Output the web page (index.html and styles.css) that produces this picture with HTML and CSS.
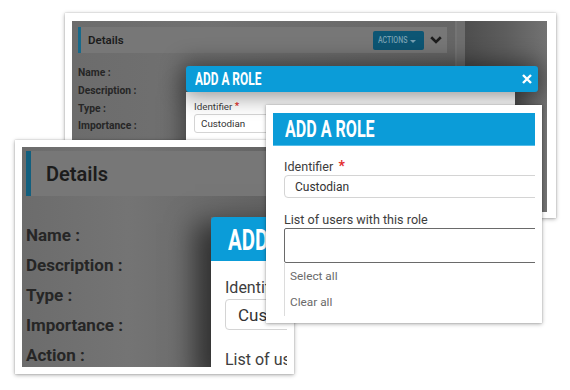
FILE: index.html
```html
<!DOCTYPE html>
<html lang="en">
<head>
<meta charset="utf-8">
<title>Add a role</title>
<link rel="stylesheet" href="styles.css">
</head>
<body>
<div class="canvas">

  <!-- back screenshot -->
  <div class="shot shot-a">
    <div class="screen screen-a">
      <div class="main-a">
        <div class="head head-a">
          <span class="head-title">Details</span>
          <span class="tools">
            <span class="btn-actions"><span class="cond">ACTIONS</span><span class="caret"></span></span>
            <svg class="chev" width="12" height="8" viewBox="0 0 12 8"><path d="M1.2 1.3 6 6 10.8 1.3" fill="none" stroke="#1d1d1d" stroke-width="2.6"/></svg>
          </span>
        </div>
        <ul class="labels labels-a">
          <li>Name :</li>
          <li>Description :</li>
          <li>Type :</li>
          <li>Importance :</li>
        </ul>
      </div>
      <div class="divider-a"></div>
      <div class="side-a"></div>

      <div class="modal-a">
        <div class="mhead mhead-a">
          <span class="cond title title-a">ADD A ROLE</span>
          <svg class="close" width="10" height="10" viewBox="0 0 10 10"><path d="M1 1 9 9M9 1 1 9" stroke="#fff" stroke-width="2.4"/></svg>
        </div>
        <div class="mbody mbody-a">
          <div class="flabel">Identifier <span class="req">*</span></div>
          <div class="finput">Custodian</div>
        </div>
      </div>
    </div>
  </div>

  <!-- front left screenshot -->
  <div class="shot shot-c">
    <div class="screen screen-c">
      <div class="head head-c"><span class="head-title">Details</span></div>
      <ul class="labels labels-c">
        <li>Name :</li>
        <li>Description :</li>
        <li>Type :</li>
        <li>Importance :</li>
        <li>Action :</li>
      </ul>
      <div class="modal-c">
        <div class="mhead mhead-c"><span class="cond title title-c">ADD A ROLE</span></div>
        <div class="mbody mbody-c">
          <div class="flabel">Identifier <span class="req">*</span></div>
          <div class="finput">Custodian</div>
          <div class="flabel flabel-list">List of users with this role</div>
        </div>
      </div>
    </div>
  </div>

  <!-- front right screenshot -->
  <div class="shot shot-b">
    <div class="screen screen-b">
      <div class="mhead mhead-b"><span class="cond title title-b">ADD A ROLE</span></div>
      <div class="mbody mbody-b">
        <div class="flabel">Identifier <span class="req">*</span></div>
        <div class="finput">Custodian</div>
        <div class="flabel flabel-list">List of users with this role</div>
        <div class="fmulti"></div>
        <ul class="options">
          <li>Select all</li>
          <li>Clear all</li>
        </ul>
      </div>
    </div>
  </div>

</div>
</body>
</html>
```

FILE: styles.css
```css
* { box-sizing: border-box; }

body {
  margin: 0;
  background: #fff;
  font-family: Roboto, "Noto Sans", sans-serif;
}

.canvas {
  position: relative;
  width: 570px;
  height: 390px;
  overflow: hidden;
  background: #fff;
}

/* screenshot frames */
.shot {
  position: absolute;
  background: #fff;
  box-shadow: 0 1px 4px rgba(0, 0, 0, .35), 0 0 1px rgba(0, 0, 0, .25);
}
.shot-a { left: 65px; top: 13px; width: 491px; height: 205px; padding: 8px 9px 6px 7px; z-index: 1; }
.shot-c { left: 15px; top: 140px; width: 279px; height: 234px; padding: 7px; z-index: 2; }
.shot-b { left: 266px; top: 105px; width: 276px; height: 218px; padding: 8px 7px 7px; z-index: 3; }

.screen {
  position: relative;
  width: 100%;
  height: 100%;
  overflow: hidden;
}

.cond {
  display: inline-block;
  font-family: Roboto, "Noto Sans", sans-serif;
  font-weight: 700;
  transform-origin: left center;
  white-space: nowrap;
}

ul { list-style: none; margin: 0; padding: 0; }

/* ---------- back screenshot ---------- */
.screen-a {
  display: grid;
  grid-template-columns: 383px 10px 1fr;
  background: #6a6a6a;
}
.main-a {
  padding: 6px 8px 0 6px;
  background: linear-gradient(90deg, #6c6c6c 0%, #717171 35%, #6b6b6b 70%, #666 100%);
}
.head {
  display: flex;
  align-items: center;
  justify-content: space-between;
  background: #777;
}
.head-title { color: #1c1c1c; font-weight: 700; }
.head-a {
  height: 26px;
  border-left: 3px solid #17698a;
  padding: 0 5px 0 7px;
}
.head-a .head-title { font-size: 11.5px; font-weight: 600; }
.tools { display: flex; align-items: center; gap: 6px; }
.btn-actions {
  position: relative;
  width: 51px;
  height: 19px;
  padding-left: 5px;
  display: flex;
  align-items: center;
  background: #0d5674;
  border-radius: 2px;
}
.btn-actions .cond {
  font-size: 9px;
  font-weight: 500;
  color: #78a0b2;
  transform: scaleX(.78);
}
.caret {
  position: absolute;
  right: 8px;
  top: 9px;
  border-left: 3px solid transparent;
  border-right: 3px solid transparent;
  border-top: 3px solid #78a0b2;
}
.labels { font-weight: 700; color: #262626; }
.labels-a {
  padding: 11px 0 0 0;
  font-size: 10.3px;
  line-height: 17.8px;
}
.divider-a {
  background: #6e6e6e;
  border-left: 2px solid #747474;
}
.side-a {
  background: linear-gradient(90deg, #4e4e4e 0%, #5d5d5d 50%, #727272 100%);
}
.modal-a {
  position: absolute;
  left: 114px;
  top: 45px;
  width: 352px;
  bottom: 0;
  display: flex;
  flex-direction: column;
}
.mhead {
  flex-shrink: 0;
  display: flex;
  align-items: center;
  justify-content: space-between;
  background: #0b9cd8;
  color: #fff;
}
.mhead-a {
  height: 26px;
  padding: 0 6px 0 9px;
  border-radius: 3px;
  box-shadow: 0 0 22px 4px rgba(0, 0, 0, .45);
  position: relative;
  z-index: 1;
}
.title-a { font-size: 17.5px; transform: scaleX(.68); }
.mbody { background: #fff; }
.mbody-a {
  width: 329px;
  flex: 1;
  padding: 8px 8px 0 8px;
  box-shadow: 0 0 22px 4px rgba(0, 0, 0, .45);
}
.flabel { color: #3d3d3d; white-space: nowrap; }
.req { color: #e32b2b; font-weight: 700; position: relative; top: -1px; }
.finput {
  border: 1px solid #d4d4d4;
  border-radius: 3px;
  color: #333;
  white-space: nowrap;
  display: flex;
  align-items: center;
  flex-shrink: 0;
}
.mbody-a .flabel { font-size: 9.8px; line-height: 13px; }
.mbody-a .finput { height: 19px; width: 340px; font-size: 9.8px; padding-left: 6px; margin-top: 1px; }

/* ---------- front left screenshot ---------- */
.screen-c {
  background: linear-gradient(90deg, #6c6c6c 0%, #747474 40%, #6e6e6e 60%, #626262 100%);
}
.head-c {
  margin: 4px 0 0 4px;
  height: 45px;
  border-left: 5px solid #125f7e;
  padding-left: 15px;
  justify-content: flex-start;
}
.head-c .head-title { font-size: 20px; font-weight: 600; }
.labels-c {
  padding: 24px 0 0 4px;
  font-size: 17px;
  line-height: 30px;
}
.modal-c {
  position: absolute;
  left: 189px;
  top: 70px;
  width: 140px;
  bottom: 0;
  display: flex;
  flex-direction: column;
  box-shadow: -10px 12px 26px 6px rgba(0, 0, 0, .55);
}
.mhead-c {
  height: 44px;
  padding-left: 17px;
  border-radius: 4px 0 0 0;
}
.title-c { font-size: 30px; transform: scaleX(.68); }
.mbody-c {
  flex: 1;
  padding: 17px 0 0 14px;
}
.mbody-c .flabel { font-size: 16px; line-height: 20px; }
.mbody-c .finput { height: 31px; width: 200px; font-size: 17px; padding-left: 12px; margin-top: 1px; border-radius: 4px; }
.mbody-c .flabel-list { margin-top: 20px; font-size: 16px; }

/* ---------- front right screenshot ---------- */
.screen-b { display: flex; flex-direction: column; background: #fff; }
.mhead-b {
  height: 33px;
  padding-left: 12px;
  border-bottom: 1px solid #56bde8;
  justify-content: flex-start;
}
.title-b { font-size: 24px; transform: scaleX(.67); }
.mbody-b {
  flex: 1;
  padding: 12px 0 0 11px;
}
.mbody-b .flabel { font-size: 12.6px; line-height: 17px; }
.mbody-b .req { font-size: 14px; top: 0; margin-left: 2px; }
.mbody-b .finput { height: 23px; width: 270px; font-size: 12px; padding-left: 10px; border-radius: 4px; }
.mbody-b .flabel-list { margin-top: 13px; }
.fmulti {
  height: 35px;
  width: 270px;
  border: 1.5px solid #6a6a6a;
  border-radius: 2px;
}
.options {
  border-left: 1px solid #dcdcdc;
  padding-left: 5px;
  font-size: 11.8px;
  line-height: 26px;
  color: #6a6a6a;
  height: 60px;
}
```
